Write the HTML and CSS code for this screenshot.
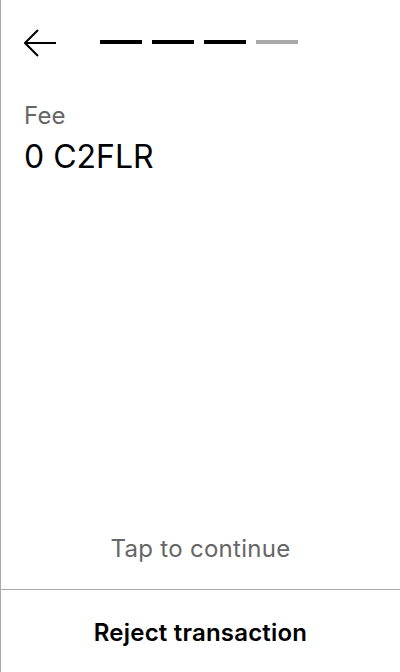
FILE: index.html
```html
<!DOCTYPE html>
<html>
<head>
<meta charset="utf-8">
<link rel="stylesheet" href="styles.css">
</head>
<body>
<div class="screen">
  <header class="top">
    <svg class="back" width="32" height="28" viewBox="0 0 32 28" fill="none" stroke="#000" stroke-width="2">
      <path d="M1 14 H32 M14 1 L1 14 L14 27"/>
    </svg>
    <div class="steps">
      <span class="step done"></span>
      <span class="step done"></span>
      <span class="step done"></span>
      <span class="step"></span>
    </div>
  </header>
  <section class="fee">
    <div class="label">Fee</div>
    <div class="value">0 C2FLR</div>
  </section>
  <div class="spacer"></div>
  <div class="tap">Tap to continue</div>
  <div class="reject">Reject transaction</div>
</div>
</body>
</html>
```
FILE: styles.css
```css
html, body {
  margin: 0;
  padding: 0;
  background: #fff;
}
body {
  font-family: Inter, "Noto Sans", sans-serif;
  color: #000;
}
.screen {
  box-sizing: border-box;
  width: 400px;
  height: 672px;
  border-left: 1px solid #aaa;
  display: flex;
  flex-direction: column;
}
.top {
  display: flex;
  align-items: center;
  height: 86px;
  padding-left: 23px;
}
.back {
  display: block;
  margin-right: 44px;
}
.steps {
  display: flex;
  gap: 10px;
  margin-top: -2px;
}
.step {
  width: 42px;
  height: 4px;
  background: #aaa;
}
.step.done {
  background: #000;
}
.fee {
  padding: 14px 0 0 23px;
}
.label {
  font-size: 24px;
  line-height: 32px;
  color: #666;
  letter-spacing: 0.2px;
}
.value {
  font-size: 32px;
  line-height: 40px;
  margin-top: 5px;
}
.spacer {
  flex: 1;
}
.tap {
  text-align: center;
  font-size: 24px;
  line-height: 32px;
  color: #666;
  letter-spacing: 0.3px;
  padding-bottom: 24px;
}
.reject {
  border-top: 1px solid #aaa;
  height: 83px;
  padding-top: 2px;
  box-sizing: border-box;
  display: flex;
  align-items: center;
  justify-content: center;
  font-size: 24px;
  font-weight: 600;
  letter-spacing: 0.2px;
}
```
